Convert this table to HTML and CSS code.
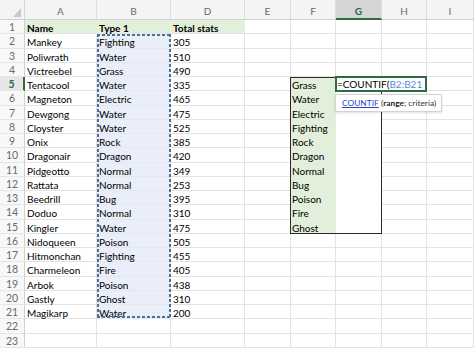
FILE: index.html
```html
<!DOCTYPE html>
<html>
<head>
<meta charset="utf-8">
<link rel="stylesheet" href="styles.css">
</head>
<body>
<div class="stack">
<div class="sheet">
  <div class="corner"></div><div class="ch">A</div><div class="ch">B</div><div class="ch">D</div><div class="ch">E</div><div class="ch">F</div><div class="ch ch-sel">G</div><div class="ch">H</div><div class="ch">I</div>

  <div class="rh">1</div><div class="c hd">Name</div><div class="c hd">Type 1</div><div class="c hd">Total stats</div><div class="c"></div><div class="c"></div><div class="c"></div><div class="c"></div><div class="c"></div>
  <div class="rh">2</div><div class="c">Mankey</div><div class="c sel">Fighting</div><div class="c">305</div><div class="c"></div><div class="c"></div><div class="c"></div><div class="c"></div><div class="c"></div>
  <div class="rh">3</div><div class="c">Poliwrath</div><div class="c sel">Water</div><div class="c">510</div><div class="c"></div><div class="c"></div><div class="c"></div><div class="c"></div><div class="c"></div>
  <div class="rh">4</div><div class="c">Victreebel</div><div class="c sel">Grass</div><div class="c">490</div><div class="c"></div><div class="c"></div><div class="c"></div><div class="c"></div><div class="c"></div>
  <div class="rh rh-sel">5</div><div class="c">Tentacool</div><div class="c sel">Water</div><div class="c">335</div><div class="c"></div><div class="c lst">Grass</div><div class="c in"></div><div class="c"></div><div class="c"></div>
  <div class="rh">6</div><div class="c">Magneton</div><div class="c sel">Electric</div><div class="c">465</div><div class="c"></div><div class="c lst">Water</div><div class="c in"></div><div class="c"></div><div class="c"></div>
  <div class="rh">7</div><div class="c">Dewgong</div><div class="c sel">Water</div><div class="c">475</div><div class="c"></div><div class="c lst">Electric</div><div class="c in"></div><div class="c"></div><div class="c"></div>
  <div class="rh">8</div><div class="c">Cloyster</div><div class="c sel">Water</div><div class="c">525</div><div class="c"></div><div class="c lst">Fighting</div><div class="c in"></div><div class="c"></div><div class="c"></div>
  <div class="rh">9</div><div class="c">Onix</div><div class="c sel">Rock</div><div class="c">385</div><div class="c"></div><div class="c lst">Rock</div><div class="c in"></div><div class="c"></div><div class="c"></div>
  <div class="rh">10</div><div class="c">Dragonair</div><div class="c sel">Dragon</div><div class="c">420</div><div class="c"></div><div class="c lst">Dragon</div><div class="c in"></div><div class="c"></div><div class="c"></div>
  <div class="rh">11</div><div class="c">Pidgeotto</div><div class="c sel">Normal</div><div class="c">349</div><div class="c"></div><div class="c lst">Normal</div><div class="c in"></div><div class="c"></div><div class="c"></div>
  <div class="rh">12</div><div class="c">Rattata</div><div class="c sel">Normal</div><div class="c">253</div><div class="c"></div><div class="c lst">Bug</div><div class="c in"></div><div class="c"></div><div class="c"></div>
  <div class="rh">13</div><div class="c">Beedrill</div><div class="c sel">Bug</div><div class="c">395</div><div class="c"></div><div class="c lst">Poison</div><div class="c in"></div><div class="c"></div><div class="c"></div>
  <div class="rh">14</div><div class="c">Doduo</div><div class="c sel">Normal</div><div class="c">310</div><div class="c"></div><div class="c lst">Fire</div><div class="c in"></div><div class="c"></div><div class="c"></div>
  <div class="rh">15</div><div class="c">Kingler</div><div class="c sel">Water</div><div class="c">475</div><div class="c"></div><div class="c lst">Ghost</div><div class="c in"></div><div class="c"></div><div class="c"></div>
  <div class="rh">16</div><div class="c">Nidoqueen</div><div class="c sel">Poison</div><div class="c">505</div><div class="c"></div><div class="c"></div><div class="c"></div><div class="c"></div><div class="c"></div>
  <div class="rh">17</div><div class="c">Hitmonchan</div><div class="c sel">Fighting</div><div class="c">455</div><div class="c"></div><div class="c"></div><div class="c"></div><div class="c"></div><div class="c"></div>
  <div class="rh">18</div><div class="c">Charmeleon</div><div class="c sel">Fire</div><div class="c">405</div><div class="c"></div><div class="c"></div><div class="c"></div><div class="c"></div><div class="c"></div>
  <div class="rh">19</div><div class="c">Arbok</div><div class="c sel">Poison</div><div class="c">438</div><div class="c"></div><div class="c"></div><div class="c"></div><div class="c"></div><div class="c"></div>
  <div class="rh">20</div><div class="c">Gastly</div><div class="c sel">Ghost</div><div class="c">310</div><div class="c"></div><div class="c"></div><div class="c"></div><div class="c"></div><div class="c"></div>
  <div class="rh">21</div><div class="c">Magikarp</div><div class="c sel">Water</div><div class="c">200</div><div class="c"></div><div class="c"></div><div class="c"></div><div class="c"></div><div class="c"></div>
  <div class="rh">22</div><div class="c"></div><div class="c"></div><div class="c"></div><div class="c"></div><div class="c"></div><div class="c"></div><div class="c"></div><div class="c"></div>
  <div class="rh">23</div><div class="c"></div><div class="c"></div><div class="c"></div><div class="c"></div><div class="c"></div><div class="c"></div><div class="c"></div><div class="c"></div>
</div>
<div class="over">
  <div class="marquee"></div>
  <div class="range"></div>
  <div class="editor">=COUNTIF(<span class="ref">B2:B21</span></div>
  <div class="tip"><span class="fn">COUNTIF</span>&nbsp;(<b>range</b>; criteria)</div>
</div>
</div>
</body>
</html>
```

FILE: styles.css
```css
* { box-sizing: border-box; margin: 0; padding: 0; }
html, body { width: 474px; height: 348px; overflow: hidden; background: #fff; }
body { font-family: Lato, "Open Sans", sans-serif; }

.stack { display: grid; }
.sheet, .over {
  grid-area: 1 / 1;
  display: grid;
  grid-template-columns: 25px 72px 74px 74px 46px 45px 46px 45px 47px;
  grid-template-rows: 20px repeat(23, 14.25px);
  font-size: 10px;
  color: #000;
}
.over { pointer-events: none; z-index: 2; }

.corner {
  background: #f4f4f4;
  border-right: 1px solid #d6d6d6;
  border-bottom: 1px solid #d0d0d0;
  display: flex;
  align-items: flex-end;
  justify-content: flex-end;
  padding: 0 3px 2px 0;
}
.corner::after {
  content: "";
  width: 0; height: 0;
  border-left: 8px solid transparent;
  border-bottom: 9px solid #cacaca;
}

.ch {
  background: #f4f4f4;
  border-right: 1px solid #dedede;
  border-bottom: 1px solid #d0d0d0;
  color: #6a6a6a;
  display: flex;
  align-items: center;
  justify-content: center;
  padding-top: 3px;
  font-size: 10px;
}
.ch-sel {
  background: #d5d5d5;
  color: #2e6a44;
  font-weight: 700;
  border-bottom: 2px solid #2e6a44;
}

.rh {
  background: #f8f8f8;
  border-right: 1px solid #d0d0d0;
  border-bottom: 1px solid #e6e6e6;
  color: #6a6a6a;
  display: flex;
  align-items: center;
  justify-content: center;
  padding-top: 1px;
  font-size: 10.5px;
}
.rh-sel {
  background: #e6e6e6;
  color: #2e6a44;
  font-weight: 700;
  border-right: 2px solid #2e6a44;
}

.c {
  border-right: 1px solid #e3e3e3;
  border-bottom: 1px solid #e3e3e3;
  padding: 1px 0 0 2px;
  line-height: 14px;
  white-space: nowrap;
}
.hd {
  background: #e2efda;
  border-right-color: #e2efda;
  font-weight: 700;
}
.sel { background: #e9eef8; border-bottom-color: #e2e7f1; border-right-color: #e9eef8; }
.lst { background: #e2efda; border-color: #e2efda; padding-left: 1px; }
.in { border-color: #fff; }

.marquee {
  grid-column: 3;
  grid-row: 3 / 23;
  margin-bottom: 1px;
  background:
    repeating-linear-gradient(90deg, #4b709b 0 3px, transparent 3px 5px) left top / 100% 2px no-repeat,
    repeating-linear-gradient(90deg, #4b709b 0 3px, transparent 3px 5px) left bottom / 100% 2px no-repeat,
    repeating-linear-gradient(180deg, #4b709b 0 3px, transparent 3px 5px) left top / 2px 100% no-repeat,
    repeating-linear-gradient(180deg, #4b709b 0 3px, transparent 3px 5px) right top / 2px 100% no-repeat;
}

.range {
  grid-column: 6 / 8;
  grid-row: 6 / 17;
  border: 1px solid #2a2a2a;
  margin-left: -1px;
}

.editor {
  grid-column: 7 / 9;
  grid-row: 6;
  z-index: 3;
  margin: -1px 0 -1px -1px;
  border: 2px solid #2e6a44;
  background: #fff;
  font-size: 10px;
  line-height: 12px;
  white-space: nowrap;
  color: #000;
}
.ref { color: #5a8bd0; }

.tip {
  grid-column: 7 / 10;
  grid-row: 7 / 9;
  z-index: 4;
  align-self: start;
  justify-self: start;
  margin: 3px 0 0 -1px;
  height: 18px;
  padding: 0 5px 0 6px;
  display: flex;
  align-items: center;
  background: #fff;
  border: 1px solid #d2d2d2;
  box-shadow: 0 1px 2px rgba(0,0,0,0.12);
  font-size: 8.4px;
  color: #333;
  white-space: nowrap;
}
.tip .fn { color: #2446c9; text-decoration: underline; }
.tip b { font-weight: 700; color: #222; }
```
